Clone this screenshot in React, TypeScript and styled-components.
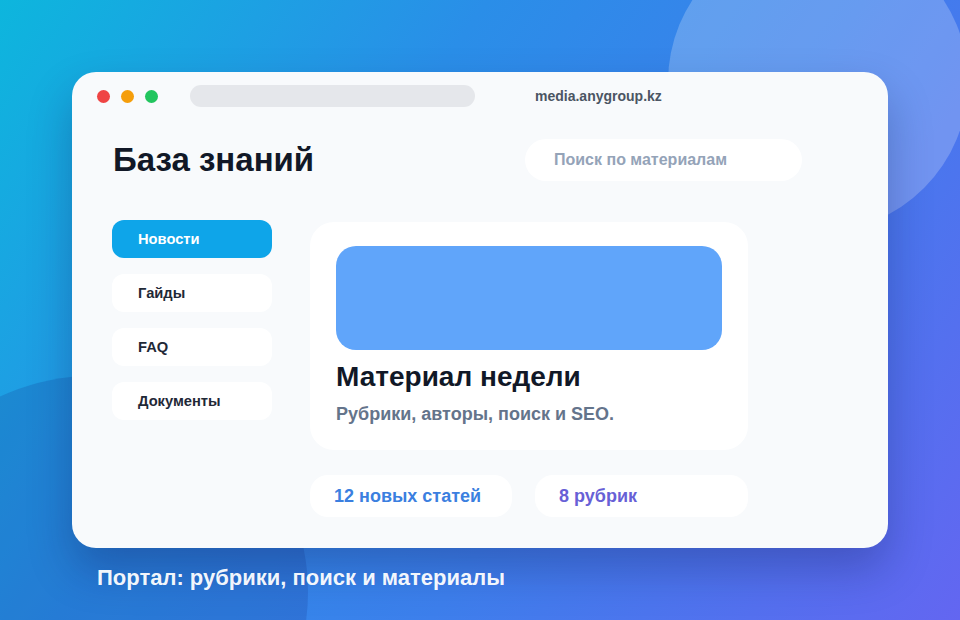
import styled, { createGlobalStyle } from 'styled-components'

const GlobalStyle = createGlobalStyle`
  * { box-sizing: border-box; }
  html, body { margin: 0; padding: 0; }
  body {
    font-family: "Liberation Sans", Arial, sans-serif;
    -webkit-font-smoothing: antialiased;
  }
`

const navItems = ['Новости', 'Гайды', 'FAQ', 'Документы']

const App = () => {
  return (
    <Stage>
      <GlobalStyle />
      <Blob $x={818} $y={82} $r={150} $bg="rgba(255,255,255,0.22)" />
      <Blob $x={92} $y={592} $r={216} $bg="rgba(20,50,140,0.2)" />

      <Window>
        <TopBar>
          <Dots>
            <Dot $c="#ef4444" />
            <Dot $c="#f59e0b" />
            <Dot $c="#22c55e" />
          </Dots>
          <AddressBar />
          <Url>media.anygroup.kz</Url>
        </TopBar>

        <Body>
          <HeadRow>
            <Title>База знаний</Title>
            <Search>Поиск по материалам</Search>
          </HeadRow>

          <Content>
            <Sidebar>
              {navItems.map((item, i) => (
                <NavItem key={item} $active={i === 0}>{item}</NavItem>
              ))}
            </Sidebar>

            <Main>
              <FeatureCard>
                <Cover />
                <CardTitle>Материал недели</CardTitle>
                <CardText>Рубрики, авторы, поиск и SEO.</CardText>
              </FeatureCard>
              <Stats>
                <Stat $c="#3b7fe0">12 новых статей</Stat>
                <Stat $c="#6760d6">8 рубрик</Stat>
              </Stats>
            </Main>
          </Content>
        </Body>
      </Window>

      <Caption>Портал: рубрики, поиск и материалы</Caption>
    </Stage>
  )
}

export default App

const Stage = styled.div`
  position: relative;
  width: 960px;
  height: 620px;
  overflow: hidden;
  padding: 72px 72px 0 72px;
  background: linear-gradient(125deg, #0db6dd 0%, #2a8ee8 35%, #3d7fec 62%, #6366f1 100%);
`

const Blob = styled.div<{ $x: number; $y: number; $r: number; $bg: string }>`
  position: absolute;
  left: ${({ $x, $r }) => $x - $r}px;
  top: ${({ $y, $r }) => $y - $r}px;
  width: ${({ $r }) => $r * 2}px;
  height: ${({ $r }) => $r * 2}px;
  border-radius: 50%;
  background: ${({ $bg }) => $bg};
`

const Window = styled.div`
  position: relative;
  width: 816px;
  height: 476px;
  border-radius: 24px;
  background: #f8fafc;
  box-shadow: 0 22px 44px rgba(15, 23, 80, 0.28);
  overflow: hidden;
`

const TopBar = styled.div`
  display: flex;
  align-items: center;
  height: 48px;
  padding-left: 25px;
`

const Dots = styled.div`
  display: flex;
  gap: 11px;
`

const Dot = styled.span<{ $c: string }>`
  width: 13px;
  height: 13px;
  border-radius: 50%;
  background: ${({ $c }) => $c};
`

const AddressBar = styled.div`
  width: 285px;
  height: 22px;
  margin-left: 32px;
  border-radius: 11px;
  background: #e5e7eb;
`

const Url = styled.div`
  margin-left: 60px;
  font-size: 14px;
  font-weight: 700;
  color: #4b5563;
`

const Body = styled.div`
  padding: 19px 0 0 40px;
`

const HeadRow = styled.div`
  display: flex;
  align-items: center;
  justify-content: space-between;
  width: 690px;
`

const Title = styled.h1`
  margin: 0 0 0 1px;
  font-size: 33px;
  font-weight: 700;
  color: #111827;
`

const Search = styled.div`
  display: flex;
  align-items: center;
  width: 277px;
  height: 42px;
  padding-left: 29px;
  border-radius: 21px;
  background: #ffffff;
  font-size: 16px;
  font-weight: 700;
  color: #94a3b8;
`

const Content = styled.div`
  display: flex;
  gap: 38px;
  margin-top: 39px;
`

const Sidebar = styled.div`
  display: flex;
  flex-direction: column;
  gap: 16px;
  width: 160px;
`

const NavItem = styled.div<{ $active?: boolean }>`
  display: flex;
  align-items: center;
  height: 38px;
  padding-left: 26px;
  border-radius: 12px;
  background: ${({ $active }) => ($active ? '#0ea5e9' : '#ffffff')};
  color: ${({ $active }) => ($active ? '#ffffff' : '#1f2937')};
  font-size: 14.7px;
  font-weight: 700;
`

const Main = styled.div`
  display: flex;
  flex-direction: column;
  gap: 25px;
  width: 438px;
  margin-top: 2px;
`

const FeatureCard = styled.div`
  height: 228px;
  padding: 24px 26px;
  border-radius: 24px;
  background: #ffffff;
`

const Cover = styled.div`
  height: 104px;
  border-radius: 20px;
  background: #60a5fa;
`

const CardTitle = styled.h2`
  margin: 11px 0 0;
  font-size: 28px;
  font-weight: 700;
  color: #111827;
  line-height: 32px;
`

const CardText = styled.p`
  margin: 10px 0 0;
  font-size: 18px;
  font-weight: 700;
  color: #64748b;
  line-height: 22px;
`

const Stats = styled.div`
  display: grid;
  grid-template-columns: 202px 1fr;
  gap: 23px;
`

const Stat = styled.div<{ $c: string }>`
  display: flex;
  align-items: center;
  height: 42px;
  padding-left: 24px;
  border-radius: 18px;
  background: #ffffff;
  color: ${({ $c }) => $c};
  font-size: 18px;
  font-weight: 700;
`

const Caption = styled.div`
  position: relative;
  margin: 17px 0 0 25px;
  font-size: 22px;
  font-weight: 700;
  color: rgba(255, 255, 255, 0.94);
`
